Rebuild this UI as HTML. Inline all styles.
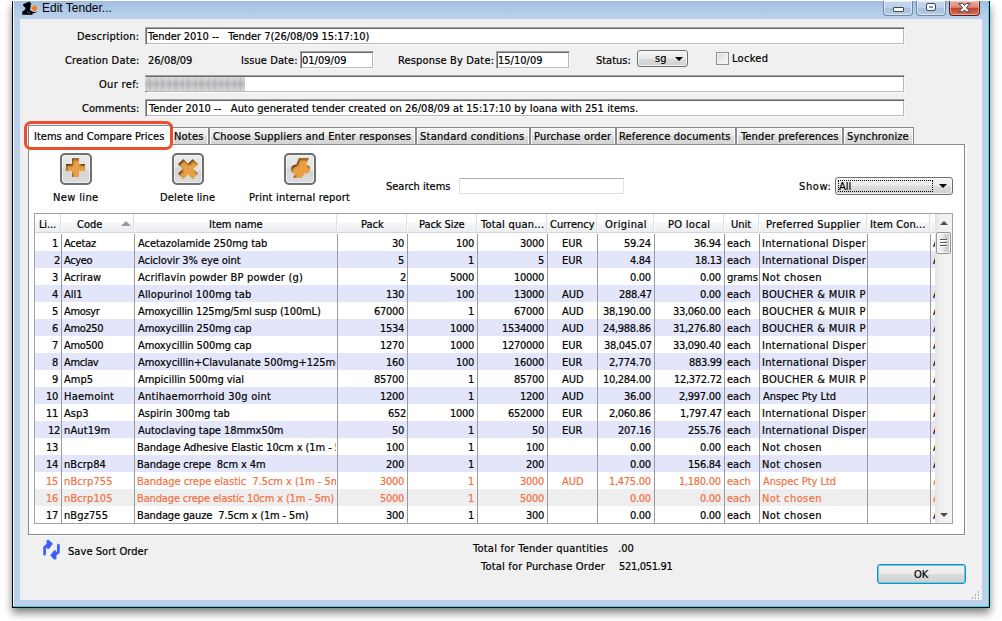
<!DOCTYPE html>
<html><head><meta charset="utf-8"><title>Edit Tender...</title>
<style>
html,body{margin:0;padding:0;}
body{width:1002px;height:621px;background:#fff;position:relative;overflow:hidden;
 font-family:"DejaVu Sans Condensed","DejaVu Sans","Liberation Sans",sans-serif;font-stretch:condensed;font-size:11px;line-height:13px;color:#000;}
.a{position:absolute;}
.t{position:absolute;white-space:pre;line-height:13px;height:13px;-webkit-text-stroke:0.2px;}
.win{left:12px;top:1px;width:976px;height:606px;border-left:1px solid #000;border-right:1px solid #000;border-bottom:1px solid #000;
 background:linear-gradient(#a3bee0 0px,#b4cde9 12px,#b9d1ea 19px,#b9d1ea 100%);
 box-shadow:0 5px 8px 0 rgba(0,0,0,.5);}
.client{left:20px;top:19px;width:962px;height:581px;background:#f0f0f0;}
.inp{position:absolute;background:#fff;box-sizing:border-box;border:1px solid;border-color:#a0a0a0 #fafafa #fafafa #a0a0a0;box-shadow:inset 1px 1px 0 #696969,inset -1px -1px 0 #b8b8b8;}
.tab{position:absolute;top:127px;height:17px;box-sizing:border-box;border:1px solid #868a92;border-bottom:none;
 background:linear-gradient(#f3f3f3 0,#ececec 48%,#dedede 52%,#d3d3d3 100%);box-shadow:inset 1px 1px 0 #fcfcfc,inset -1px 0 0 #fcfcfc;}
.ib{position:absolute;width:32px;height:32px;box-sizing:border-box;border:2px solid #707070;border-radius:5px;
 background:linear-gradient(188deg,#ebebeb 0,#e3e3e3 47%,#d4d4d4 53%,#dcdcdc 100%);box-shadow:inset 0 0 0 1px rgba(255,255,255,.55);}
.row{position:absolute;left:35px;width:900px;height:17px;}
.o{color:#f27044;}
.vl{position:absolute;top:234px;height:289px;width:1px;background:#9a9a9a;}
.hs{position:absolute;top:214px;height:18px;width:1px;background:#fbfbfc;box-shadow:-1px 0 0 #dedfe2;}
.btn{position:absolute;box-sizing:border-box;border:1px solid #707070;border-radius:3px;background:linear-gradient(#f3f3f3 0,#ebebeb 48%,#dddddd 52%,#cfcfcf 100%);box-shadow:inset 0 0 0 1px rgba(255,255,255,.7);}
</style></head><body>
<div class="a win"></div>
<div class="a" style="left:13px;top:1px;width:1px;height:605px;background:#fdfeff"></div>
<div class="a" style="left:988px;top:1px;width:1px;height:606px;background:#2fd6f0"></div>
<div class="a" style="left:13px;top:606px;width:976px;height:1px;background:#2fd6f0"></div>
<div class="a client"></div>
<svg class="a" style="left:20px;top:0px" width="20" height="17" viewBox="0 0 20 17">
<path d="M9.6 1.2 L10.2 3.1 L11.6 3.3 L10.8 4.2 L10.8 5.8 L10.2 8.4 L9.9 10.1 L10.8 10.4 L12.5 11.8 L16 11.9 L16.8 11.2 L17.1 11.8 L15 12.8 L12.5 13.6 L12.5 14.8 L2.1 14.8 L2.3 11.6 L4.7 10.1 L5.5 8.4 L5.2 7.5 L3.2 5.8 L3.2 4.3 L7.6 2.2 L9 2 Z" fill="#000"/>
<path d="M6.5 11.2 Q7.5 13.6 10.6 12.2" fill="none" stroke="#9aa" stroke-width=".5"/>
<path d="M13.2 5.6 h2.6 v1.4 h1.4 v2.6 h-1.4 v1.4 h-2.6 v-1.4 h-1.4 v-2.6 h1.4 Z" fill="#ff7800"/>
</svg>
<div class="t" style="left:42px;top:1px;font-family:'Liberation Sans',sans-serif;font-size:12px;line-height:14px;height:14px;-webkit-text-stroke:0">Edit Tender...</div>
<div class="a" style="left:883px;top:1px;width:30px;height:15px;box-sizing:border-box;border-top:none;border-radius:0 0 4px 4px;border:1px solid #6f86a5;border-top:none;background:linear-gradient(#c4d7ee 0,#bdd1ea 48%,#a7bfde 52%,#b4cbe6 100%);box-shadow:inset 0 0 0 1px rgba(255,255,255,.55)"></div>
<div class="a" style="left:916px;top:1px;width:30px;height:15px;box-sizing:border-box;border-top:none;border-radius:0 0 4px 4px;border:1px solid #6f86a5;border-top:none;background:linear-gradient(#c4d7ee 0,#bdd1ea 48%,#a7bfde 52%,#b4cbe6 100%);box-shadow:inset 0 0 0 1px rgba(255,255,255,.55)"></div>
<div class="a" style="left:949px;top:1px;width:31px;height:15px;box-sizing:border-box;border-top:none;border-radius:0 0 4px 4px;border:1px solid #5a1f1c;border-top:none;background:linear-gradient(#e9a99b 0,#dc8674 45%,#c2442a 52%,#d4735a 100%);box-shadow:inset 0 0 0 1px rgba(255,255,255,.4)"></div>
<div class="a" style="left:893px;top:7px;width:9px;height:3px;background:#fff;border:1px solid #3f4a5c;border-radius:1px"></div>
<div class="a" style="left:927px;top:4px;width:4px;height:2px;background:#7d95b8;border:2px solid #fff;outline:1px solid #3f4a5c;border-radius:1px"></div>
<svg class="a" style="left:957px;top:2px" width="15" height="11" viewBox="0 0 15 11"><path d="M1.9 1.6 h3.8 l1.8 1.9 l1.8-1.9 h3.8 l-3.7 4.1 l3.7 4.1 h-3.8 l-1.8-1.9 l-1.8 1.9 h-3.8 l3.7-4.1 Z" fill="#fff" stroke="#3d3f4c" stroke-width="1" stroke-linejoin="round"/></svg>
<div class="a" style="left:0;top:0;width:1002px;height:1px;background:#fdfdfd"></div>

<div class="t" style="left:77px;top:30px;letter-spacing:0.21px;">Description:</div>
<div class="t" style="left:65px;top:54px;letter-spacing:0.18px;">Creation Date:</div>
<div class="t" style="left:99px;top:78px;letter-spacing:0.33px;">Our ref:</div>
<div class="t" style="left:82px;top:102px;letter-spacing:0.04px;">Comments:</div>
<div class="inp" style="left:145px;top:27px;width:760px;height:18px"></div>
<div class="t" style="left:148px;top:30px;letter-spacing:-0.04px;">Tender 2010 --   Tender 7(26/08/09 15:17:10)</div>
<div class="t" style="left:148px;top:54px;letter-spacing:-0.01px;">26/08/09</div>
<div class="t" style="left:241px;top:54px;letter-spacing:0.08px;">Issue Date:</div>
<div class="inp" style="left:300px;top:51px;width:74px;height:18px"></div>
<div class="t" style="left:302px;top:54px;letter-spacing:0.01px;">01/09/09</div>
<div class="t" style="left:398px;top:54px;letter-spacing:0.16px;">Response By Date:</div>
<div class="inp" style="left:496px;top:51px;width:74px;height:18px"></div>
<div class="t" style="left:498px;top:54px;letter-spacing:0.01px;">15/10/09</div>
<div class="t" style="left:596px;top:54px;letter-spacing:-0.02px;">Status:</div>
<div class="btn" style="left:637px;top:50px;width:51px;height:17px"></div>
<div class="t" style="left:655px;top:52px;">sg</div>
<div class="a" style="left:675px;top:57px;width:0;height:0;border-left:4px solid transparent;border-right:4px solid transparent;border-top:4px solid #000"></div>
<div class="a" style="left:716px;top:52px;width:13px;height:13px;box-sizing:border-box;border:1px solid #8e8f8f;background:linear-gradient(135deg,#d8d8d8,#fafafa);box-shadow:inset 0 0 0 1px #f4f4f4"></div>
<div class="t" style="left:732px;top:52px;letter-spacing:0.28px;">Locked</div>
<div class="inp" style="left:145px;top:75px;width:760px;height:18px"></div>
<div class="a" style="left:145px;top:77px;width:100px;height:14px;background:repeating-linear-gradient(90deg,rgba(255,255,255,.18) 0,rgba(255,255,255,0) 3px,rgba(120,100,120,.10) 5px,rgba(255,255,255,.14) 7px,rgba(255,255,255,0) 11px,rgba(110,110,130,.10) 13px),linear-gradient(#d8d8d8 0,#c9c7ca 25%,#b8b5b9 50%,#c6c5c7 75%,#d5d5d5 100%)"></div>
<div class="inp" style="left:145px;top:99px;width:760px;height:18px"></div>
<div class="t" style="left:149px;top:102px;letter-spacing:0.05px;">Tender 2010 --   Auto generated tender created on 26/08/09 at 15:17:10 by Ioana with 251 items.</div>
<div class="a" style="left:28px;top:144px;width:937px;height:391px;box-sizing:border-box;border:1px solid #868a92;background:#fff;box-shadow:1px 1px 0 #fbfbfb,2px 0 0 #fbfbfb"></div>
<div class="tab" style="left:172px;width:37px"></div>
<div class="t" style="left:174px;top:130px;letter-spacing:0.2px;">Notes</div>
<div class="tab" style="left:209px;width:207px"></div>
<div class="t" style="left:213px;top:130px;letter-spacing:0.22px;">Choose Suppliers and Enter responses</div>
<div class="tab" style="left:416px;width:114px"></div>
<div class="t" style="left:420px;top:130px;letter-spacing:0.28px;">Standard conditions</div>
<div class="tab" style="left:530px;width:86px"></div>
<div class="t" style="left:534px;top:130px;letter-spacing:0.21px;">Purchase order</div>
<div class="tab" style="left:616px;width:120px"></div>
<div class="t" style="left:619px;top:130px;letter-spacing:0.19px;">Reference documents</div>
<div class="tab" style="left:736px;width:107px"></div>
<div class="t" style="left:741px;top:130px;letter-spacing:0.16px;">Tender preferences</div>
<div class="tab" style="left:843px;width:71px"></div>
<div class="t" style="left:847px;top:130px;letter-spacing:0.14px;">Synchronize</div>
<div class="a" style="left:28px;top:125px;width:145px;height:20px;box-sizing:border-box;border:1px solid #868a92;border-bottom:none;background:#fff"></div>
<div class="t" style="left:34px;top:130px;letter-spacing:0.02px;">Items and Compare Prices</div>
<div class="a" style="left:24px;top:121px;width:149px;height:29px;box-sizing:border-box;border:3px solid #e8502c;border-radius:7px"></div>
<div class="ib" style="left:60px;top:153px"><svg class="a" style="left:0;top:0" width="28" height="28" viewBox="0 0 28 28"><defs><filter id="is" x="-10%" y="-10%" width="120%" height="120%"><feComponentTransfer in="SourceAlpha"><feFuncA type="table" tableValues="1 0"/></feComponentTransfer><feGaussianBlur stdDeviation="1.3"/><feOffset dx="0.5" dy="1.8" result="sh"/><feFlood flood-color="#4e2600" flood-opacity="1"/><feComposite in2="sh" operator="in"/><feComposite in2="SourceAlpha" operator="in" result="inner"/><feMerge><feMergeNode in="SourceGraphic"/><feMergeNode in="inner"/></feMerge></filter></defs><path d="M10 3 h7 v6 h6 v7 h-6 v6 h-7 v-6 h-6 v-7 h6 Z" fill="#e9a044" filter="url(#is)"/></svg></div>
<div class="ib" style="left:172px;top:153px"><svg class="a" style="left:0;top:0" width="28" height="28" viewBox="0 0 28 28"><path d="M4 9.3 L9.3 4 L14 8.7 L18.7 4 L24 9.3 L19.3 14 L24 18.7 L18.7 24 L14 19.3 L9.3 24 L4 18.7 L8.7 14 Z" fill="#e9a044" filter="url(#is)"/></svg></div>
<div class="ib" style="left:284px;top:153px"><svg class="a" style="left:0;top:0" width="28" height="28" viewBox="0 0 28 28"><path d="M13 3 H22.9 L20.3 9.7 Q24 10.2 24 13.5 Q24 17.6 21.5 18.3 L18.5 18.5 L15.4 22.8 H7.2 L9.4 18.5 Q5 18.3 5 14 Q5 10 10.4 9.5 Z" fill="#e9a044" filter="url(#is)"/></svg></div>
<div class="t" style="left:53px;top:191px;letter-spacing:0.36px;">New line</div>
<div class="t" style="left:160px;top:191px;letter-spacing:0.15px;">Delete line</div>
<div class="t" style="left:249px;top:191px;letter-spacing:0.19px;">Print internal report</div>
<div class="t" style="left:386px;top:180px;letter-spacing:-0.02px;">Search items</div>
<div class="a" style="left:459px;top:178px;width:165px;height:16px;box-sizing:border-box;border:1px solid #dde1e8;border-top-color:#abadb3;background:#fff"></div>
<div class="t" style="left:799px;top:180px;letter-spacing:0.6px;">Show:</div>
<div class="btn" style="left:835px;top:177px;width:118px;height:18px"></div>
<div class="a" style="left:838px;top:180px;width:95px;height:12px;box-sizing:border-box;border:1px dotted #000"></div>
<div class="t" style="left:839px;top:180px;">All</div>
<div class="a" style="left:939px;top:184px;width:0;height:0;border-left:4px solid transparent;border-right:4px solid transparent;border-top:4px solid #000"></div>
<div class="a" style="left:34px;top:213px;width:919px;height:311px;box-sizing:border-box;border:1px solid #a0a3ab;background:#fff"></div>
<div class="a" style="left:35px;top:214px;width:900px;height:18px;background:linear-gradient(#fff 0,#fff 45%,#f5f6f8 50%,#ecedf0 100%)"></div>
<div class="a" style="left:35px;top:232px;width:900px;height:1px;background:#d5d5d5"></div>
<div class="hs" style="left:61px"></div>
<div class="hs" style="left:134px"></div>
<div class="hs" style="left:337px"></div>
<div class="hs" style="left:407px"></div>
<div class="hs" style="left:477px"></div>
<div class="hs" style="left:547px"></div>
<div class="hs" style="left:597px"></div>
<div class="hs" style="left:654px"></div>
<div class="hs" style="left:724px"></div>
<div class="hs" style="left:759px"></div>
<div class="hs" style="left:867px"></div>
<div class="hs" style="left:930px"></div>
<div class="t" style="left:39px;top:218px;letter-spacing:-0.15px;">Li...</div>
<div class="t" style="left:77px;top:218px;">Code</div>
<div class="t" style="left:209px;top:218px;letter-spacing:-0.01px;">Item name</div>
<div class="t" style="left:361px;top:218px;">Pack</div>
<div class="t" style="left:419px;top:218px;letter-spacing:-0.06px;">Pack Size</div>
<div class="t" style="left:481px;top:218px;letter-spacing:0.22px;">Total quan...</div>
<div class="t" style="left:550px;top:218px;letter-spacing:0.01px;">Currency</div>
<div class="t" style="left:605px;top:218px;letter-spacing:0.41px;">Original</div>
<div class="t" style="left:668px;top:218px;letter-spacing:0.3px;">PO local</div>
<div class="t" style="left:731px;top:218px;">Unit</div>
<div class="t" style="left:766px;top:218px;letter-spacing:0.28px;">Preferred Supplier</div>
<div class="t" style="left:870px;top:218px;letter-spacing:0.11px;">Item Con...</div>
<div class="a" style="left:121px;top:221px;width:0;height:0;border-left:5px solid transparent;border-right:5px solid transparent;border-bottom:5px solid #9a9a9a"></div>
<div class="row" style="top:234px;background:#fff"></div>
<div class="t" style="left:52px;top:237px;letter-spacing:-0.3px;">1</div>
<div class="t" style="left:64px;top:237px;letter-spacing:-0.2px;">Acetaz</div>
<div class="t" style="left:138px;top:237px;letter-spacing:-0.04px;width:198px;overflow:hidden;">Acetazolamide 250mg tab</div>
<div class="t" style="left:392px;top:237px;letter-spacing:-0.3px;">30</div>
<div class="t" style="left:456px;top:237px;letter-spacing:-0.3px;">100</div>
<div class="t" style="left:520px;top:237px;letter-spacing:-0.3px;">3000</div>
<div class="t" style="left:562px;top:237px;">EUR</div>
<div class="t" style="left:624px;top:237px;letter-spacing:-0.3px;">59.24</div>
<div class="t" style="left:694px;top:237px;letter-spacing:-0.3px;">36.94</div>
<div class="t" style="left:727px;top:237px;">each</div>
<div class="t" style="left:762px;top:237px;letter-spacing:0.29px;width:104px;overflow:hidden;">International Disper</div>
<div class="t" style="left:933px;top:237px;width:2px;overflow:hidden;">A</div>
<div class="row" style="top:251px;background:#e3e6fb"></div>
<div class="t" style="left:54px;top:254px;letter-spacing:-0.3px;">2</div>
<div class="t" style="left:64px;top:254px;letter-spacing:-0.35px;">Acyeo</div>
<div class="t" style="left:138px;top:254px;letter-spacing:-0.06px;width:198px;overflow:hidden;">Aciclovir 3% eye oint</div>
<div class="t" style="left:398px;top:254px;letter-spacing:-0.3px;">5</div>
<div class="t" style="left:468px;top:254px;letter-spacing:-0.3px;">1</div>
<div class="t" style="left:538px;top:254px;letter-spacing:-0.3px;">5</div>
<div class="t" style="left:562px;top:254px;">EUR</div>
<div class="t" style="left:630px;top:254px;letter-spacing:-0.3px;">4.84</div>
<div class="t" style="left:695px;top:254px;letter-spacing:-0.3px;">18.13</div>
<div class="t" style="left:727px;top:254px;">each</div>
<div class="t" style="left:762px;top:254px;letter-spacing:0.29px;width:104px;overflow:hidden;">International Disper</div>
<div class="t" style="left:933px;top:254px;width:2px;overflow:hidden;">A</div>
<div class="row" style="top:268px;background:#fff"></div>
<div class="t" style="left:52px;top:271px;letter-spacing:-0.3px;">3</div>
<div class="t" style="left:64px;top:271px;">Acriraw</div>
<div class="t" style="left:138px;top:271px;letter-spacing:0.19px;width:198px;overflow:hidden;">Acriflavin powder BP powder (g)</div>
<div class="t" style="left:400px;top:271px;letter-spacing:-0.3px;">2</div>
<div class="t" style="left:450px;top:271px;letter-spacing:-0.3px;">5000</div>
<div class="t" style="left:514px;top:271px;letter-spacing:-0.3px;">10000</div>
<div class="t" style="left:630px;top:271px;letter-spacing:-0.3px;">0.00</div>
<div class="t" style="left:700px;top:271px;letter-spacing:-0.3px;">0.00</div>
<div class="t" style="left:727px;top:271px;letter-spacing:-0.1px;">grams</div>
<div class="t" style="left:762px;top:271px;letter-spacing:0.41px;width:104px;overflow:hidden;">Not chosen</div>
<div class="row" style="top:285px;background:#e3e6fb"></div>
<div class="t" style="left:52px;top:288px;letter-spacing:-0.3px;">4</div>
<div class="t" style="left:64px;top:288px;">All1</div>
<div class="t" style="left:138px;top:288px;letter-spacing:0.16px;width:198px;overflow:hidden;">Allopurinol 100mg tab</div>
<div class="t" style="left:386px;top:288px;letter-spacing:-0.3px;">130</div>
<div class="t" style="left:456px;top:288px;letter-spacing:-0.3px;">100</div>
<div class="t" style="left:514px;top:288px;letter-spacing:-0.3px;">13000</div>
<div class="t" style="left:562px;top:288px;">AUD</div>
<div class="t" style="left:619px;top:288px;letter-spacing:-0.3px;">288.47</div>
<div class="t" style="left:700px;top:288px;letter-spacing:-0.3px;">0.00</div>
<div class="t" style="left:727px;top:288px;">each</div>
<div class="t" style="left:762px;top:288px;letter-spacing:0.37px;width:104px;overflow:hidden;">BOUCHER &amp; MUIR P</div>
<div class="t" style="left:933px;top:288px;width:2px;overflow:hidden;">A</div>
<div class="row" style="top:302px;background:#fff"></div>
<div class="t" style="left:52px;top:305px;letter-spacing:-0.3px;">5</div>
<div class="t" style="left:64px;top:305px;letter-spacing:-0.36px;">Amosyr</div>
<div class="t" style="left:138px;top:305px;letter-spacing:-0.14px;width:198px;overflow:hidden;">Amoxycillin 125mg/5ml susp (100mL)</div>
<div class="t" style="left:374px;top:305px;letter-spacing:-0.3px;">67000</div>
<div class="t" style="left:468px;top:305px;letter-spacing:-0.3px;">1</div>
<div class="t" style="left:514px;top:305px;letter-spacing:-0.3px;">67000</div>
<div class="t" style="left:562px;top:305px;">AUD</div>
<div class="t" style="left:603px;top:305px;letter-spacing:-0.3px;">38,190.00</div>
<div class="t" style="left:673px;top:305px;letter-spacing:-0.3px;">33,060.00</div>
<div class="t" style="left:727px;top:305px;">each</div>
<div class="t" style="left:762px;top:305px;letter-spacing:0.37px;width:104px;overflow:hidden;">BOUCHER &amp; MUIR P</div>
<div class="t" style="left:933px;top:305px;width:2px;overflow:hidden;">A</div>
<div class="row" style="top:319px;background:#e3e6fb"></div>
<div class="t" style="left:52px;top:322px;letter-spacing:-0.3px;">6</div>
<div class="t" style="left:64px;top:322px;letter-spacing:-0.36px;">Amo250</div>
<div class="t" style="left:138px;top:322px;letter-spacing:-0.09px;width:198px;overflow:hidden;">Amoxycillin 250mg cap</div>
<div class="t" style="left:380px;top:322px;letter-spacing:-0.3px;">1534</div>
<div class="t" style="left:450px;top:322px;letter-spacing:-0.3px;">1000</div>
<div class="t" style="left:502px;top:322px;letter-spacing:-0.3px;">1534000</div>
<div class="t" style="left:562px;top:322px;">AUD</div>
<div class="t" style="left:603px;top:322px;letter-spacing:-0.3px;">24,988.86</div>
<div class="t" style="left:673px;top:322px;letter-spacing:-0.3px;">31,276.80</div>
<div class="t" style="left:727px;top:322px;">each</div>
<div class="t" style="left:762px;top:322px;letter-spacing:0.37px;width:104px;overflow:hidden;">BOUCHER &amp; MUIR P</div>
<div class="t" style="left:933px;top:322px;width:2px;overflow:hidden;">A</div>
<div class="row" style="top:336px;background:#fff"></div>
<div class="t" style="left:52px;top:339px;letter-spacing:-0.3px;">7</div>
<div class="t" style="left:64px;top:339px;letter-spacing:-0.36px;">Amo500</div>
<div class="t" style="left:138px;top:339px;letter-spacing:-0.09px;width:198px;overflow:hidden;">Amoxycillin 500mg cap</div>
<div class="t" style="left:380px;top:339px;letter-spacing:-0.3px;">1270</div>
<div class="t" style="left:450px;top:339px;letter-spacing:-0.3px;">1000</div>
<div class="t" style="left:502px;top:339px;letter-spacing:-0.3px;">1270000</div>
<div class="t" style="left:562px;top:339px;">EUR</div>
<div class="t" style="left:604px;top:339px;letter-spacing:-0.3px;">38,045.07</div>
<div class="t" style="left:673px;top:339px;letter-spacing:-0.3px;">33,090.40</div>
<div class="t" style="left:727px;top:339px;">each</div>
<div class="t" style="left:762px;top:339px;letter-spacing:0.29px;width:104px;overflow:hidden;">International Disper</div>
<div class="t" style="left:933px;top:339px;width:2px;overflow:hidden;">A</div>
<div class="row" style="top:353px;background:#e3e6fb"></div>
<div class="t" style="left:52px;top:356px;letter-spacing:-0.3px;">8</div>
<div class="t" style="left:64px;top:356px;letter-spacing:-0.36px;">Amclav</div>
<div class="t" style="left:138px;top:356px;letter-spacing:-0.04px;width:198px;overflow:hidden;">Amoxycillin+Clavulanate 500mg+125mg</div>
<div class="t" style="left:386px;top:356px;letter-spacing:-0.3px;">160</div>
<div class="t" style="left:456px;top:356px;letter-spacing:-0.3px;">100</div>
<div class="t" style="left:514px;top:356px;letter-spacing:-0.3px;">16000</div>
<div class="t" style="left:562px;top:356px;">EUR</div>
<div class="t" style="left:609px;top:356px;letter-spacing:-0.3px;">2,774.70</div>
<div class="t" style="left:689px;top:356px;letter-spacing:-0.3px;">883.99</div>
<div class="t" style="left:727px;top:356px;">each</div>
<div class="t" style="left:762px;top:356px;letter-spacing:0.29px;width:104px;overflow:hidden;">International Disper</div>
<div class="t" style="left:933px;top:356px;width:2px;overflow:hidden;">A</div>
<div class="row" style="top:370px;background:#fff"></div>
<div class="t" style="left:52px;top:373px;letter-spacing:-0.3px;">9</div>
<div class="t" style="left:64px;top:373px;">Amp5</div>
<div class="t" style="left:138px;top:373px;letter-spacing:-0.03px;width:198px;overflow:hidden;">Ampicillin 500mg vial</div>
<div class="t" style="left:374px;top:373px;letter-spacing:-0.3px;">85700</div>
<div class="t" style="left:468px;top:373px;letter-spacing:-0.3px;">1</div>
<div class="t" style="left:514px;top:373px;letter-spacing:-0.3px;">85700</div>
<div class="t" style="left:562px;top:373px;">AUD</div>
<div class="t" style="left:603px;top:373px;letter-spacing:-0.3px;">10,284.00</div>
<div class="t" style="left:674px;top:373px;letter-spacing:-0.3px;">12,372.72</div>
<div class="t" style="left:727px;top:373px;">each</div>
<div class="t" style="left:762px;top:373px;letter-spacing:0.37px;width:104px;overflow:hidden;">BOUCHER &amp; MUIR P</div>
<div class="t" style="left:933px;top:373px;width:2px;overflow:hidden;">A</div>
<div class="row" style="top:387px;background:#e3e6fb"></div>
<div class="t" style="left:46px;top:390px;letter-spacing:-0.3px;">10</div>
<div class="t" style="left:64px;top:390px;letter-spacing:0.24px;">Haemoint</div>
<div class="t" style="left:138px;top:390px;letter-spacing:0.26px;width:198px;overflow:hidden;">Antihaemorrhoid 30g oint</div>
<div class="t" style="left:380px;top:390px;letter-spacing:-0.3px;">1200</div>
<div class="t" style="left:468px;top:390px;letter-spacing:-0.3px;">1</div>
<div class="t" style="left:520px;top:390px;letter-spacing:-0.3px;">1200</div>
<div class="t" style="left:562px;top:390px;">AUD</div>
<div class="t" style="left:624px;top:390px;letter-spacing:-0.3px;">36.00</div>
<div class="t" style="left:679px;top:390px;letter-spacing:-0.3px;">2,997.00</div>
<div class="t" style="left:727px;top:390px;">each</div>
<div class="t" style="left:763px;top:390px;letter-spacing:-0.05px;width:103px;overflow:hidden;">Anspec Pty Ltd</div>
<div class="t" style="left:933px;top:390px;width:2px;overflow:hidden;">A</div>
<div class="row" style="top:404px;background:#fff"></div>
<div class="t" style="left:46px;top:407px;letter-spacing:-0.3px;">11</div>
<div class="t" style="left:64px;top:407px;">Asp3</div>
<div class="t" style="left:138px;top:407px;letter-spacing:0.03px;width:198px;overflow:hidden;">Aspirin 300mg tab</div>
<div class="t" style="left:388px;top:407px;letter-spacing:-0.3px;">652</div>
<div class="t" style="left:450px;top:407px;letter-spacing:-0.3px;">1000</div>
<div class="t" style="left:508px;top:407px;letter-spacing:-0.3px;">652000</div>
<div class="t" style="left:562px;top:407px;">EUR</div>
<div class="t" style="left:609px;top:407px;letter-spacing:-0.3px;">2,060.86</div>
<div class="t" style="left:680px;top:407px;letter-spacing:-0.3px;">1,797.47</div>
<div class="t" style="left:727px;top:407px;">each</div>
<div class="t" style="left:762px;top:407px;letter-spacing:0.29px;width:104px;overflow:hidden;">International Disper</div>
<div class="t" style="left:933px;top:407px;width:2px;overflow:hidden;">A</div>
<div class="row" style="top:421px;background:#e3e6fb"></div>
<div class="t" style="left:48px;top:424px;letter-spacing:-0.3px;">12</div>
<div class="t" style="left:64px;top:424px;letter-spacing:0.13px;">nAut19m</div>
<div class="t" style="left:138px;top:424px;letter-spacing:-0.06px;width:198px;overflow:hidden;">Autoclaving tape 18mmx50m</div>
<div class="t" style="left:392px;top:424px;letter-spacing:-0.3px;">50</div>
<div class="t" style="left:468px;top:424px;letter-spacing:-0.3px;">1</div>
<div class="t" style="left:532px;top:424px;letter-spacing:-0.3px;">50</div>
<div class="t" style="left:562px;top:424px;">EUR</div>
<div class="t" style="left:618px;top:424px;letter-spacing:-0.3px;">207.16</div>
<div class="t" style="left:688px;top:424px;letter-spacing:-0.3px;">255.76</div>
<div class="t" style="left:727px;top:424px;">each</div>
<div class="t" style="left:762px;top:424px;letter-spacing:0.29px;width:104px;overflow:hidden;">International Disper</div>
<div class="t" style="left:933px;top:424px;width:2px;overflow:hidden;">A</div>
<div class="row" style="top:438px;background:#fff"></div>
<div class="t" style="left:46px;top:441px;letter-spacing:-0.3px;">13</div>
<div class="t" style="left:137px;top:441px;letter-spacing:-0.06px;width:199px;overflow:hidden;">Bandage Adhesive Elastic 10cm x (1m - 5</div>
<div class="t" style="left:386px;top:441px;letter-spacing:-0.3px;">100</div>
<div class="t" style="left:468px;top:441px;letter-spacing:-0.3px;">1</div>
<div class="t" style="left:526px;top:441px;letter-spacing:-0.3px;">100</div>
<div class="t" style="left:630px;top:441px;letter-spacing:-0.3px;">0.00</div>
<div class="t" style="left:700px;top:441px;letter-spacing:-0.3px;">0.00</div>
<div class="t" style="left:727px;top:441px;">each</div>
<div class="t" style="left:762px;top:441px;letter-spacing:0.41px;width:104px;overflow:hidden;">Not chosen</div>
<div class="t" style="left:933px;top:441px;width:2px;overflow:hidden;">A</div>
<div class="row" style="top:455px;background:#e3e6fb"></div>
<div class="t" style="left:46px;top:458px;letter-spacing:-0.3px;">14</div>
<div class="t" style="left:64px;top:458px;letter-spacing:0.07px;">nBcrp84</div>
<div class="t" style="left:137px;top:458px;letter-spacing:-0.08px;width:199px;overflow:hidden;">Bandage crepe  8cm x 4m</div>
<div class="t" style="left:386px;top:458px;letter-spacing:-0.3px;">200</div>
<div class="t" style="left:468px;top:458px;letter-spacing:-0.3px;">1</div>
<div class="t" style="left:526px;top:458px;letter-spacing:-0.3px;">200</div>
<div class="t" style="left:630px;top:458px;letter-spacing:-0.3px;">0.00</div>
<div class="t" style="left:688px;top:458px;letter-spacing:-0.3px;">156.84</div>
<div class="t" style="left:727px;top:458px;">each</div>
<div class="t" style="left:762px;top:458px;letter-spacing:0.41px;width:104px;overflow:hidden;">Not chosen</div>
<div class="t" style="left:933px;top:458px;width:2px;overflow:hidden;">A</div>
<div class="row" style="top:472px;background:#fff"></div>
<div class="t o" style="left:46px;top:475px;letter-spacing:-0.3px;">15</div>
<div class="t o" style="left:64px;top:475px;letter-spacing:0.11px;">nBcrp755</div>
<div class="t o" style="left:137px;top:475px;letter-spacing:-0.04px;width:199px;overflow:hidden;">Bandage crepe elastic  7.5cm x (1m - 5m</div>
<div class="t o" style="left:380px;top:475px;letter-spacing:-0.3px;">3000</div>
<div class="t o" style="left:468px;top:475px;letter-spacing:-0.3px;">1</div>
<div class="t o" style="left:520px;top:475px;letter-spacing:-0.3px;">3000</div>
<div class="t o" style="left:562px;top:475px;">AUD</div>
<div class="t o" style="left:609px;top:475px;letter-spacing:-0.3px;">1,475.00</div>
<div class="t o" style="left:679px;top:475px;letter-spacing:-0.3px;">1,180.00</div>
<div class="t o" style="left:727px;top:475px;">each</div>
<div class="t o" style="left:763px;top:475px;letter-spacing:-0.05px;width:103px;overflow:hidden;">Anspec Pty Ltd</div>
<div class="t o" style="left:933px;top:475px;width:2px;overflow:hidden;">A</div>
<div class="row" style="top:489px;background:#eeeeee"></div>
<div class="t o" style="left:46px;top:492px;letter-spacing:-0.3px;">16</div>
<div class="t o" style="left:64px;top:492px;letter-spacing:0.11px;">nBcrp105</div>
<div class="t o" style="left:137px;top:492px;letter-spacing:-0.14px;width:199px;overflow:hidden;">Bandage crepe elastic 10cm x (1m - 5m)</div>
<div class="t o" style="left:380px;top:492px;letter-spacing:-0.3px;">5000</div>
<div class="t o" style="left:468px;top:492px;letter-spacing:-0.3px;">1</div>
<div class="t o" style="left:520px;top:492px;letter-spacing:-0.3px;">5000</div>
<div class="t o" style="left:630px;top:492px;letter-spacing:-0.3px;">0.00</div>
<div class="t o" style="left:700px;top:492px;letter-spacing:-0.3px;">0.00</div>
<div class="t o" style="left:727px;top:492px;">each</div>
<div class="t o" style="left:762px;top:492px;letter-spacing:0.41px;width:104px;overflow:hidden;">Not chosen</div>
<div class="t o" style="left:933px;top:492px;width:2px;overflow:hidden;">A</div>
<div class="row" style="top:506px;background:#fff"></div>
<div class="t" style="left:46px;top:509px;letter-spacing:-0.3px;">17</div>
<div class="t" style="left:64px;top:509px;letter-spacing:0.1px;">nBgz755</div>
<div class="t" style="left:137px;top:509px;letter-spacing:-0.13px;width:199px;overflow:hidden;">Bandage gauze  7.5cm x (1m - 5m)</div>
<div class="t" style="left:386px;top:509px;letter-spacing:-0.3px;">300</div>
<div class="t" style="left:468px;top:509px;letter-spacing:-0.3px;">1</div>
<div class="t" style="left:526px;top:509px;letter-spacing:-0.3px;">300</div>
<div class="t" style="left:630px;top:509px;letter-spacing:-0.3px;">0.00</div>
<div class="t" style="left:700px;top:509px;letter-spacing:-0.3px;">0.00</div>
<div class="t" style="left:727px;top:509px;">each</div>
<div class="t" style="left:762px;top:509px;letter-spacing:0.41px;width:104px;overflow:hidden;">Not chosen</div>
<div class="t" style="left:933px;top:509px;width:2px;overflow:hidden;">A</div>
<div class="vl" style="left:61px"></div>
<div class="vl" style="left:134px"></div>
<div class="vl" style="left:337px"></div>
<div class="vl" style="left:407px"></div>
<div class="vl" style="left:477px"></div>
<div class="vl" style="left:547px"></div>
<div class="vl" style="left:597px"></div>
<div class="vl" style="left:654px"></div>
<div class="vl" style="left:724px"></div>
<div class="vl" style="left:759px"></div>
<div class="vl" style="left:867px"></div>
<div class="vl" style="left:930px"></div>
<div class="a" style="left:935px;top:214px;width:17px;height:309px;background:linear-gradient(90deg,#e4e4e4 0,#f0f0f0 30%,#f3f3f3 100%)"></div>
<div class="a" style="left:940px;top:221px;width:0;height:0;border-left:4px solid transparent;border-right:4px solid transparent;border-bottom:4px solid #4c4c4c"></div>
<div class="a" style="left:940px;top:513px;width:0;height:0;border-left:4px solid transparent;border-right:4px solid transparent;border-top:4px solid #4c4c4c"></div>
<div class="a" style="left:936px;top:232px;width:15px;height:22px;box-sizing:border-box;border:1px solid #979797;border-radius:2px;background:linear-gradient(90deg,#f4f4f4 0,#e9e9e9 48%,#d6d6d6 52%,#c6c6c6 100%);box-shadow:inset 0 0 0 1px rgba(255,255,255,.8)"></div>
<div class="a" style="left:940px;top:239px;width:7px;height:1px;background:#5a5a5a;box-shadow:0 1px 0 #fff"></div>
<div class="a" style="left:940px;top:242px;width:7px;height:1px;background:#5a5a5a;box-shadow:0 1px 0 #fff"></div>
<div class="a" style="left:940px;top:245px;width:7px;height:1px;background:#5a5a5a;box-shadow:0 1px 0 #fff"></div>
<svg class="a" style="left:41px;top:539px" width="21" height="22" viewBox="0 0 21 22">
<g id="ar" fill="#3d5cff" stroke="#3d5cff"><path d="M5.8 1.5 L7.9 1.2 L11.5 4.8 L7.9 9.7 L6.2 9.6 Z" stroke-width=".6" stroke-linejoin="round"/><path d="M8 4.9 L3.6 8.3 V15.2 H4.6" fill="none" stroke-width="2.7" stroke-linejoin="round"/></g>
<use href="#ar" transform="rotate(180 10.5 10.7)"/>
</svg>
<div class="t" style="left:68px;top:545px;letter-spacing:0.06px;">Save Sort Order</div>
<div class="t" style="left:473px;top:542px;letter-spacing:0.25px;">Total for Tender quantities</div>
<div class="t" style="left:618px;top:542px;">.00</div>
<div class="t" style="left:481px;top:560px;letter-spacing:0.21px;">Total for Purchase Order</div>
<div class="t" style="left:619px;top:560px;letter-spacing:-0.33px;">521,051.91</div>
<div class="btn" style="left:877px;top:564px;width:89px;height:20px;border-color:#3c7fb1;box-shadow:inset 0 0 0 1px #48d8fb"></div>
<div class="t" style="left:914px;top:568px;">OK</div>
<div class="a" style="left:978px;top:597px;width:1px;height:2px;background:#a8a8a8;box-shadow:1px 1px 0 #fff"></div>
<div class="a" style="left:975px;top:597px;width:1px;height:2px;background:#a8a8a8;box-shadow:1px 1px 0 #fff"></div>
<div class="a" style="left:972px;top:597px;width:1px;height:2px;background:#a8a8a8;box-shadow:1px 1px 0 #fff"></div>
<div class="a" style="left:978px;top:594px;width:1px;height:2px;background:#a8a8a8;box-shadow:1px 1px 0 #fff"></div>
<div class="a" style="left:975px;top:594px;width:1px;height:2px;background:#a8a8a8;box-shadow:1px 1px 0 #fff"></div>
<div class="a" style="left:978px;top:591px;width:1px;height:2px;background:#a8a8a8;box-shadow:1px 1px 0 #fff"></div>
</body></html>
